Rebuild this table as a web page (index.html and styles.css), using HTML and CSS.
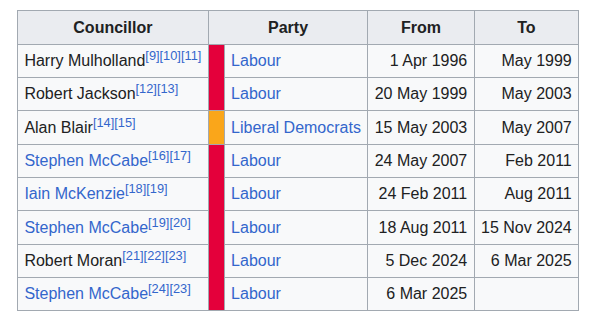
FILE: index.html
```html
<!DOCTYPE html>
<html lang="en">
<head>
<meta charset="utf-8">
<title>Councillors</title>
<link rel="stylesheet" href="styles.css">
</head>
<body>
<table class="wikitable">
  <thead>
    <tr><th>Councillor</th><th colspan="2">Party</th><th>From</th><th>To</th></tr>
  </thead>
  <tbody>
    <tr>
      <td>Harry Mulholland<sup class="ref"><a>[9]</a><a>[10]</a><a>[11]</a></sup></td>
      <td class="strip lab" rowspan="2"></td>
      <td><a>Labour</a></td>
      <td class="num">1 Apr 1996</td>
      <td class="num">May 1999</td>
    </tr>
    <tr>
      <td>Robert Jackson<sup class="ref"><a>[12]</a><a>[13]</a></sup></td>
      <td><a>Labour</a></td>
      <td class="num">20 May 1999</td>
      <td class="num">May 2003</td>
    </tr>
    <tr>
      <td>Alan Blair<sup class="ref"><a>[14]</a><a>[15]</a></sup></td>
      <td class="strip ld"></td>
      <td><a>Liberal Democrats</a></td>
      <td class="num">15 May 2003</td>
      <td class="num">May 2007</td>
    </tr>
    <tr>
      <td><a>Stephen McCabe</a><sup class="ref"><a>[16]</a><a>[17]</a></sup></td>
      <td class="strip lab" rowspan="5"></td>
      <td><a>Labour</a></td>
      <td class="num">24 May 2007</td>
      <td class="num">Feb 2011</td>
    </tr>
    <tr>
      <td><a>Iain McKenzie</a><sup class="ref"><a>[18]</a><a>[19]</a></sup></td>
      <td><a>Labour</a></td>
      <td class="num">24 Feb 2011</td>
      <td class="num">Aug 2011</td>
    </tr>
    <tr>
      <td><a>Stephen McCabe</a><sup class="ref"><a>[19]</a><a>[20]</a></sup></td>
      <td><a>Labour</a></td>
      <td class="num">18 Aug 2011</td>
      <td class="num">15 Nov 2024</td>
    </tr>
    <tr>
      <td>Robert Moran<sup class="ref"><a>[21]</a><a>[22]</a><a>[23]</a></sup></td>
      <td><a>Labour</a></td>
      <td class="num">5 Dec 2024</td>
      <td class="num">6 Mar 2025</td>
    </tr>
    <tr>
      <td><a>Stephen McCabe</a><sup class="ref"><a>[24]</a><a>[23]</a></sup></td>
      <td><a>Labour</a></td>
      <td class="num">6 Mar 2025</td>
      <td class="num"></td>
    </tr>
  </tbody>
</table>
</body>
</html>
```
FILE: styles.css
```css
html, body {
  margin: 0;
  padding: 0;
  background: #ffffff;
}
body {
  padding: 10px 0 0 17px;
  font-family: "Liberation Sans", Arial, sans-serif;
  font-size: 16px;
  color: #202122;
}
.wikitable {
  border-collapse: collapse;
  border: 1px solid #a2a9b1;
  background: #f8f9fa;
  color: #202122;
  line-height: 1.6;
}
.wikitable th,
.wikitable td {
  border: 1px solid #a2a9b1;
  padding: 3.37px 0.4em;
  text-align: left;
  white-space: nowrap;
}
.wikitable th {
  background: #eaecf0;
  font-weight: bold;
  text-align: center;
  padding-top: 3.6px;
  padding-bottom: 3.6px;
}
.wikitable td.num {
  text-align: right;
}
.wikitable td.strip {
  padding: 0;
  width: 15px;
}
.lab { background: #e4003b; }
.ld { background: #faa61a; }
a {
  color: #3366cc;
  text-decoration: none;
}
sup.ref {
  font-size: 80%;
  line-height: 1;
  vertical-align: super;
}
```
